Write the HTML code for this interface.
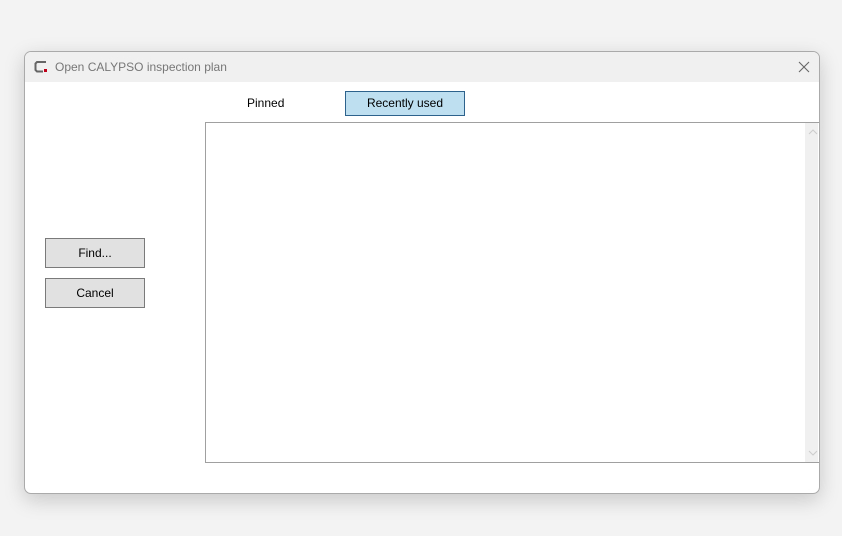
<!DOCTYPE html>
<html><head><meta charset="utf-8"><style>
body{margin:0;width:842px;height:536px;background:#f3f3f3;font-family:"Liberation Sans",sans-serif;font-size:12px;position:relative;overflow:hidden}
.win{position:absolute;left:24px;top:51px;width:794px;height:441px;border:1px solid #aaa;border-radius:7px;background:#fff;overflow:hidden;box-shadow:0 6px 20px rgba(0,0,0,.18)}
.title{position:absolute;left:0;top:0;width:100%;height:30px;background:#f0f0f0}
.title span{position:absolute;left:30px;top:8px;color:#777;font-size:12px}
.abs{position:absolute}
.btn{position:absolute;background:#e1e1e1;border:1px solid #7a7a7a;box-sizing:border-box;text-align:center;color:#000}
</style></head><body>
<div class="win">
 <div class="title">
  <svg class="abs" style="left:9px;top:8px" width="16" height="14" viewBox="0 0 16 14"><path d="M12 2H3L1.5 3.5V10L3 11.5H9" fill="none" stroke="#666" stroke-width="2"/><rect x="10" y="9" width="3" height="3" fill="#c00018"/></svg>
  <span>Open CALYPSO inspection plan</span>
  <svg class="abs" style="left:773px;top:9px" width="12" height="12" viewBox="0 0 12 12"><path d="M1 1L11 11M11 1L1 11" stroke="#666" stroke-width="1.1"/></svg>
 </div>
 <div class="abs" style="left:222px;top:44px;color:#000">Pinned</div>
 <div class="btn" style="left:320px;top:39px;width:120px;height:25px;background:#bddff0;border-color:#2c628b;line-height:23px">Recently used</div>
 <div class="btn" style="left:20px;top:186px;width:100px;height:30px;line-height:28px">Find...</div>
 <div class="btn" style="left:20px;top:226px;width:100px;height:30px;line-height:28px">Cancel</div>
 <div class="abs" style="left:180px;top:70px;width:620px;height:341px;border:1px solid #a0a0a0;box-sizing:border-box">
  <div class="abs" style="right:6px;top:0;width:13px;height:100%;background:#f0f0f0"></div>
  <svg class="abs" style="left:602px;top:5px" width="10" height="8"><path d="M1 6L5 2L9 6" fill="none" stroke="#ccc"/></svg>
  <svg class="abs" style="left:602px;top:326px" width="10" height="8"><path d="M1 2L5 6L9 2" fill="none" stroke="#ccc"/></svg>
 </div>
</div>
</body></html>
